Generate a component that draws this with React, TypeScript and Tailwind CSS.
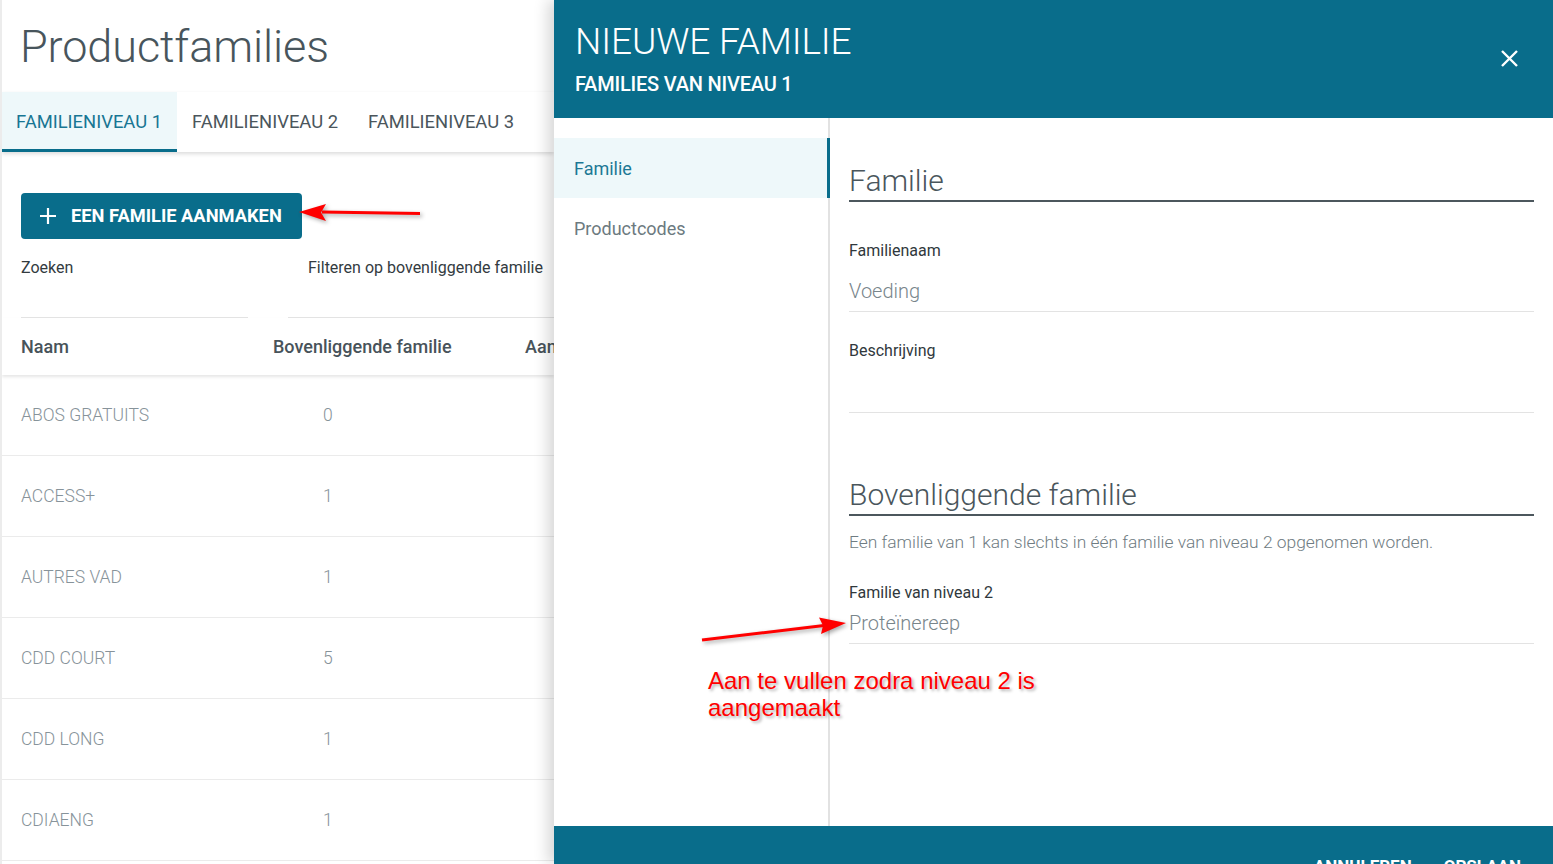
import React from "react";

const rows = [
  { name: "ABOS GRATUITS", count: "0" },
  { name: "ACCESS+", count: "1" },
  { name: "AUTRES VAD", count: "1" },
  { name: "CDD COURT", count: "5" },
  { name: "CDD LONG", count: "1" },
  { name: "CDIAENG", count: "1" },
];

function FamilyList() {
  return (
    <div className="w-[554px] h-[864px] border-l-2 border-[#ececec] bg-white overflow-hidden">
      <h1 className="pl-[18px] pt-[19px] h-[92px] text-[45px] leading-[55px] font-light text-[#48555c] tracking-[-0.1px]">
        Productfamilies
      </h1>
      <div className="flex h-[60px] shadow-[0_2px_4px_rgba(0,0,0,0.14)] relative">
        <div className="flex items-center px-[14px] bg-[#eef8fa] border-b-[3px] border-[#096d8b] text-[18.4px] text-[#187693] w-[175px] pt-[3px]">
          FAMILIENIVEAU 1
        </div>
        <div className="flex items-center px-[15px] text-[18.4px] text-[#4b565c]">FAMILIENIVEAU 2</div>
        <div className="flex items-center px-[15px] text-[18.4px] text-[#4b565c]">FAMILIENIVEAU 3</div>
      </div>
      <div className="pl-[19px] pt-[41px]">
        <button className="flex items-center gap-[14px] h-[46px] w-[281px] rounded-[4px] bg-[#096d8b] pl-[18px] text-white text-[18.3px] font-bold">
          <svg width="18" height="18" viewBox="0 0 18 18" aria-hidden="true">
            <path d="M9 1v16M1 9h16" stroke="white" strokeWidth="2.2" />
          </svg>
          EEN FAMILIE AANMAKEN
        </button>
      </div>
      <div className="flex pl-[19px] pt-[19px]">
        <div className="w-[227px]">
          <div className="text-[16px] leading-[20px] text-[#333b3f]">Zoeken</div>
          <div className="h-[40px] border-b border-[#e4e4e4]" />
        </div>
        <div className="ml-[40px] flex-1">
          <div className="text-[16px] leading-[20px] text-[#333b3f] pl-[20px]">Filteren op bovenliggende familie</div>
          <div className="h-[40px] border-b border-[#e4e4e4]" />
        </div>
      </div>
      <div className="flex items-center h-[57px] shadow-[0_2px_3px_rgba(0,0,0,0.1)] text-[18px] font-medium text-[#48535a] relative">
        <div className="pl-[19px] w-[271px] shrink-0">Naam</div>
        <div className="w-[252px] shrink-0">Bovenliggende familie</div>
        <div className="whitespace-nowrap shrink-0">Aantal</div>
      </div>
      {rows.map((r) => (
        <div key={r.name} className="flex items-center h-[81px] border-b border-[#ebebeb] text-[17.5px] font-light text-[#87939a]">
          <div className="pl-[19px] w-[321px] shrink-0">{r.name}</div>
          <div>{r.count}</div>
        </div>
      ))}
    </div>
  );
}

function Field({ label, value, tall }: { label: string; value?: string; tall?: boolean }) {
  return (
    <div className="border-b border-[#e3e3e3]">
      <div className="text-[16px] leading-[20px] text-[#30383c]">{label}</div>
      {tall ? (
        <div className="h-[51px]" />
      ) : (
        <div className="pt-[16px] pb-[6px] text-[20px] leading-[28px] font-light text-[#78858b]">{value}</div>
      )}
    </div>
  );
}

function NewFamilyPanel() {
  return (
    <div className="absolute left-[554px] top-0 w-[999px] h-[864px] bg-white flex flex-col shadow-[-6px_0_14px_rgba(0,0,0,0.16)]">
      <div className="h-[118px] shrink-0 bg-[#096d8b] text-white flex justify-between pl-[21px] pr-[34px]">
        <div>
          <div className="pt-[20px] text-[37px] leading-[44px] font-light tracking-[-0.1px]">NIEUWE FAMILIE</div>
          <div className="pt-[9px] text-[20px] leading-[22px] font-medium tracking-[-0.2px]">FAMILIES VAN NIVEAU 1</div>
        </div>
        <svg className="mt-[49px]" width="19" height="19" viewBox="0 0 19 19" aria-hidden="true">
          <path d="M2 2l15 15M17 2L2 17" stroke="white" strokeWidth="2.4" />
        </svg>
      </div>
      <div className="flex-1 flex min-h-0">
        <div className="w-[276px] shrink-0 border-r-2 border-[#e2e2e2] pt-[20px]">
          <div className="h-[60px] flex items-center pl-[20px] bg-[#eef8fa] border-r-[3px] border-[#096d8b] -mr-[2px] text-[18px] text-[#1d7895]">
            Familie
          </div>
          <div className="h-[60px] flex items-center pl-[20px] text-[18px] text-[#6c7a80]">Productcodes</div>
        </div>
        <div className="flex-1 pl-[19px] pr-[19px] pt-[45px]">
          <h2 className="text-[30px] leading-[36px] font-light text-[#4a565c] border-b-2 border-[#4c575d] pb-[1px]">Familie</h2>
          <div className="mt-[39px]">
            <Field label="Familienaam" value="Voeding" />
          </div>
          <div className="mt-[29px]">
            <Field label="Beschrijving" tall />
          </div>
          <h2 className="mt-[64px] text-[30px] leading-[36px] font-light text-[#4a565c] border-b-2 border-[#4c575d] pb-[1px]">
            Bovenliggende familie
          </h2>
          <p className="mt-[14px] text-[17.4px] leading-[24px] font-light text-[#6f7c82]">
            Een familie van 1 kan slechts in één familie van niveau 2 opgenomen worden.
          </p>
          <div className="mt-[29px]">
            <div className="border-b border-[#e3e3e3]">
              <div className="text-[16px] leading-[20px] text-[#30383c]">Familie van niveau 2</div>
              <div className="pt-[6px] pb-[6px] text-[20px] leading-[28px] font-light text-[#78858b]">Proteïnereep</div>
            </div>
          </div>
        </div>
      </div>
      <div className="h-[38px] shrink-0 bg-[#096d8b] overflow-hidden flex justify-end gap-[32px] pr-[32px] pt-[32px] text-white text-[17px] leading-[16px] font-bold">
        <span>ANNULEREN</span>
        <span>OPSLAAN</span>
      </div>
    </div>
  );
}

function Annotations() {
  return (
    <>
      <svg
        className="absolute left-0 top-0 pointer-events-none drop-shadow-[2px_2px_2px_rgba(0,0,0,0.35)]"
        width="1553"
        height="864"
        viewBox="0 0 1553 864"
        aria-hidden="true"
      >
        <path d="M322 212 L420 213.5" stroke="#ff0000" strokeWidth="3" />
        <polygon points="299,212 326,204 321,212.5 326,221" fill="#ff0000" />
        <path d="M702 640 L824 625.5" stroke="#ff0000" strokeWidth="3" />
        <polygon points="846,623 819,617.5 823,625.6 821,634" fill="#ff0000" />
      </svg>
      <div className="absolute left-[708px] top-[667px] text-[24px] leading-[27px] text-[#ff0000] font-['Liberation_Sans',Arial,sans-serif] [text-shadow:2px_2px_3px_rgba(0,0,0,0.3)]">
        Aan te vullen zodra niveau 2 is
        <br />
        aangemaakt
      </div>
    </>
  );
}

export default function App() {
  return (
    <div className="relative w-[1553px] h-[864px] overflow-hidden bg-white font-['Roboto','Noto_Sans',sans-serif]">
      <FamilyList />
      <NewFamilyPanel />
      <Annotations />
    </div>
  );
}
